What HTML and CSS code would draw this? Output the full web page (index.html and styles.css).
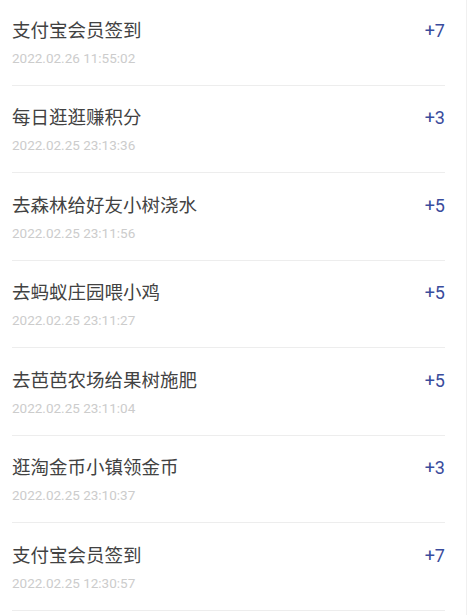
FILE: index.html
```html
<!DOCTYPE html>
<html lang="zh">
<head>
<meta charset="utf-8">
<link rel="stylesheet" href="styles.css">
</head>
<body>
<div class="page">
  <ul class="list">
    <li class="row"><div class="info"><div class="title">支付宝会员签到</div><div class="date">2022.02.26 11:55:02</div></div><div class="amount">+7</div></li>
    <li class="row"><div class="info"><div class="title">每日逛逛赚积分</div><div class="date">2022.02.25 23:13:36</div></div><div class="amount">+3</div></li>
    <li class="row"><div class="info"><div class="title">去森林给好友小树浇水</div><div class="date">2022.02.25 23:11:56</div></div><div class="amount">+5</div></li>
    <li class="row"><div class="info"><div class="title">去蚂蚁庄园喂小鸡</div><div class="date">2022.02.25 23:11:27</div></div><div class="amount">+5</div></li>
    <li class="row"><div class="info"><div class="title">去芭芭农场给果树施肥</div><div class="date">2022.02.25 23:11:04</div></div><div class="amount">+5</div></li>
    <li class="row"><div class="info"><div class="title">逛淘金币小镇领金币</div><div class="date">2022.02.25 23:10:37</div></div><div class="amount">+3</div></li>
    <li class="row"><div class="info"><div class="title">支付宝会员签到</div><div class="date">2022.02.25 12:30:57</div></div><div class="amount">+7</div></li>
  </ul>
</div>
</body>
</html>
```
FILE: styles.css
```css
html, body {
  margin: 0;
  padding: 0;
  background: #fff;
  overflow: hidden;
}
.page {
  width: 466px;
  height: 615px;
  border-right: 1px solid #f0f0f0;
  overflow: hidden;
  font-family: Roboto, "Noto Sans CJK SC", sans-serif;
}
.list {
  list-style: none;
  margin: -2px 0 0 0;
  padding: 0 21px 0 12px;
}
.row {
  display: flex;
  justify-content: space-between;
  align-items: flex-start;
  padding: 20.5px 0 18px;
  border-bottom: 1px solid #ededed;
}
.title {
  font-size: 18.5px;
  line-height: 24px;
  color: #424242;
}
.date {
  margin-top: 6px;
  font-size: 13.5px;
  line-height: 18px;
  color: #cccccc;
}
.amount {
  font-size: 18px;
  line-height: 24px;
  color: #3a4c9c;
}
```
